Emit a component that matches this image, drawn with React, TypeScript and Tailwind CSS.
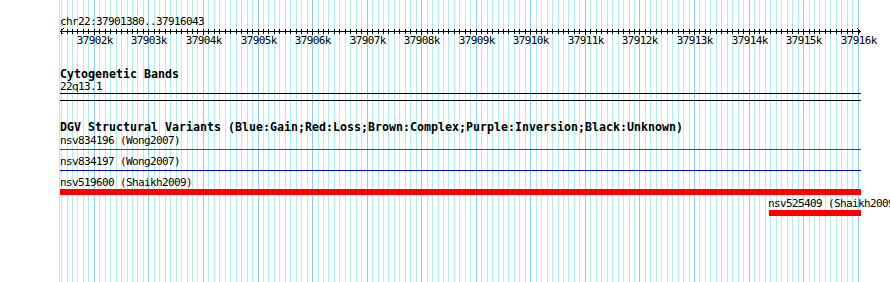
import React from 'react'

const START = 37901380
const END = 37916043
const scale = 800 / (END - START)
const px = (bp: number) => Math.round(60 + (bp - START) * scale)

const ticks: { x: number; major: boolean; bp: number }[] = []
for (let bp = 37901400; bp <= 37916000; bp += 100) {
  ticks.push({ x: px(bp), major: bp % 1000 === 0, bp })
}

function Grid() {
  return (
    <svg
      className="absolute inset-0"
      width={890}
      height={282}
      shapeRendering="crispEdges"
    >
      <rect x={59} y={0} width={1} height={282} fill="#afeeee" />
      {ticks.map((t) => (
        <rect
          key={t.bp}
          x={t.x}
          y={0}
          width={1}
          height={282}
          fill={t.major ? '#87cefa' : '#afeeee'}
        />
      ))}
      {/* ruler */}
      <rect x={60} y={31} width={801} height={1} fill="#000" />
      {ticks.map((t) => (
        <rect key={'t' + t.bp} x={t.x} y={29} width={1} height={t.major ? 6 : 5} fill="#000" />
      ))}
      <path d="M60.5 31.5 L63.5 28.5 M60.5 31.5 L63.5 34.5" stroke="#000" fill="none" />
      <path d="M860.5 31.5 L857.5 28.5 M860.5 31.5 L857.5 34.5" stroke="#000" fill="none" />
      {ticks
        .filter((t) => t.major)
        .map((t) => (
          <text
            key={'l' + t.bp}
            x={t.x + 0.8}
            y={44}
            textAnchor="middle"
            fontFamily="'DejaVu Sans Mono', monospace"
            fontSize={11}
            letterSpacing={-0.62}
            fill="#000"
          >
            {t.bp / 1000}k
          </text>
        ))}
    </svg>
  )
}

function Label({ children, className = '' }: { children: React.ReactNode; className?: string }) {
  return <div className={`h-[12px] whitespace-nowrap ${className}`}>{children}</div>
}

function Header({ children, className = '' }: { children: React.ReactNode; className?: string }) {
  return (
    <div className={`h-[14px] whitespace-nowrap text-[11.63px] leading-[14px] tracking-normal font-bold ${className}`}>
      {children}
    </div>
  )
}

export default function App() {
  return (
    <div className="relative w-[890px] h-[282px] overflow-hidden bg-white text-black font-['DejaVu_Sans_Mono',monospace] text-[11px] leading-[12px] tracking-[-0.62px]">
      <Grid />
      <div className="relative flex flex-col pl-[60px]">
        <Label className="mt-[16px]">chr22:37901380..37916043</Label>

        <Header className="mt-[39px]">Cytogenetic Bands</Header>
        <Label>22q13.1</Label>
        <div className="h-px w-[801px] bg-black" />
        <div className="mt-[6px] h-px w-[801px] bg-black" />

        <Header className="mt-[19px]">
          DGV Structural Variants (Blue:Gain;Red:Loss;Brown:Complex;Purple:Inversion;Black:Unknown)
        </Header>
        <Label className="mt-px">nsv834196 (Wong2007)</Label>
        <div className="mt-[2px] h-px w-[801px] bg-[#ff0000]" />
        <Label className="mt-[6px]">nsv834197 (Wong2007)</Label>
        <div className="mt-[2px] h-px w-[801px] bg-[#0000ff]" />
        <Label className="mt-[6px]">nsv519600 (Shaikh2009)</Label>
        <div className="h-[6px] w-[801px] bg-[#ff0000]" />
        <Label className="mt-[3px] ml-[708px]">nsv525409 (Shaikh2009)</Label>
        <div className="ml-[709px] h-[6px] w-[92px] bg-[#ff0000]" />
      </div>
    </div>
  )
}
